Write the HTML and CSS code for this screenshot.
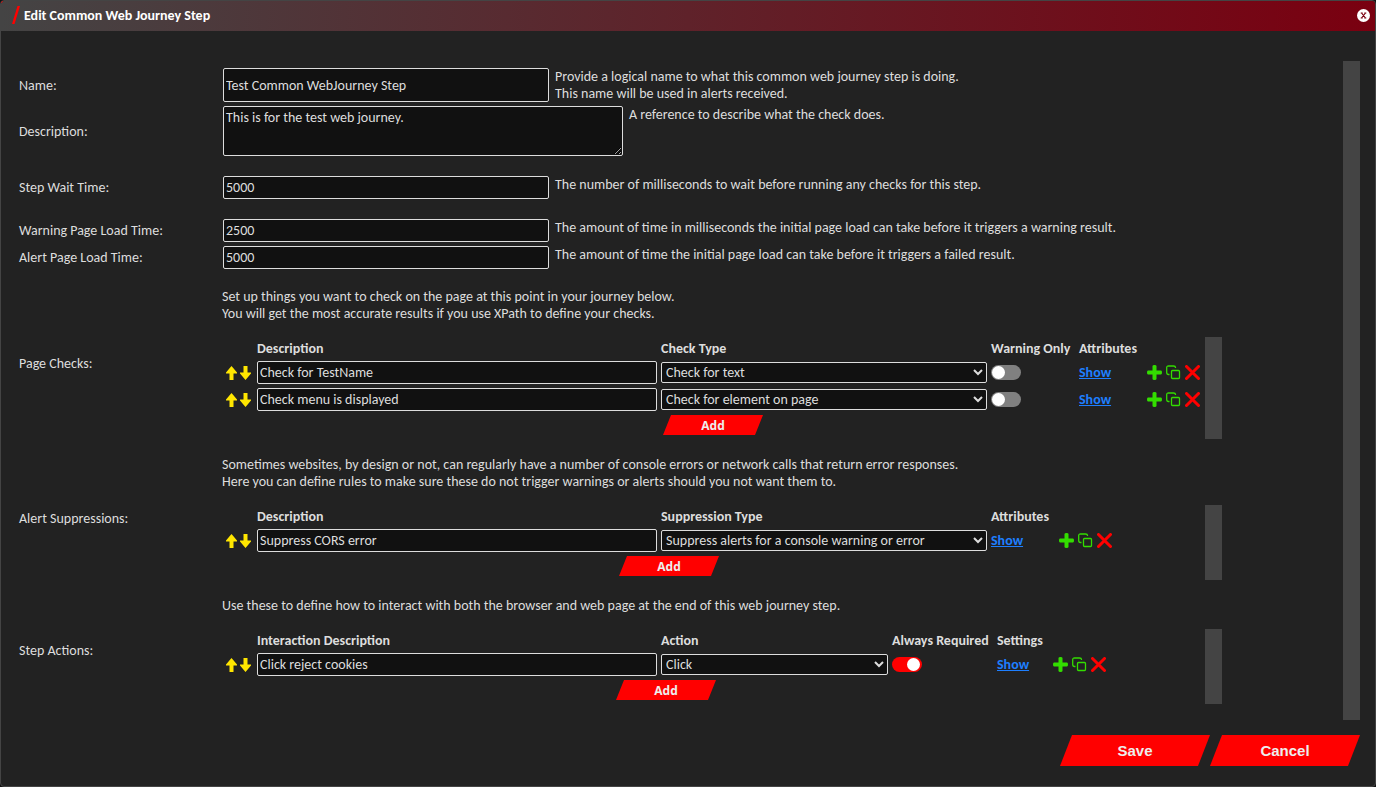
FILE: index.html
```
<!DOCTYPE html>
<html lang="en">
<head>
<meta charset="utf-8">
<title>Edit Common Web Journey Step</title>
<link rel="stylesheet" href="styles.css">
</head>
<body>
<svg class="symbols" aria-hidden="true">
  <symbol id="i-up" viewBox="0 0 11 14"><path d="M5.5 0L11 6.5V7.5H7.5V14H3.5V7.5H0V6.5Z" fill="#ffe600"/></symbol>
  <symbol id="i-down" viewBox="0 0 11 14"><path d="M5.5 14L11 7.5V6.5H7.5V0H3.5V6.5H0V7.5Z" fill="#ffe600"/></symbol>
  <symbol id="i-plus" viewBox="0 0 15 15"><path d="M5.5 1Q5.5 0 7.5 0T9.5 1V5.5H14Q15 5.5 15 7.5T14 9.5H9.5V14Q9.500 15 7.5 15T5.5 14V9.5H1Q0 9.5 0 7.5T1 5.5H5.5Z" fill="#33dd00"/></symbol>
  <symbol id="i-copy" viewBox="0 0 15 15"><g fill="none" stroke="#33dd00" stroke-width="1.3"><rect x="5.5" y="5.5" width="8" height="8" rx="1"/><path d="M3.5 9.500H2.500Q.7 9.500 .7 7.500V2.500Q.7 1 2.500 1H7.500Q9.500 1 9.500 2.500V3"/></g></symbol>
  <symbol id="i-delete" viewBox="0 0 15 15"><path d="M1.500 1.500L13.500 13.500M13.500 1.500L1.500 13.500" stroke="#f00" stroke-width="3" stroke-linecap="round"/></symbol>
</svg>
<form class="dialog">
  <div class="header">
    <svg class="slash" viewBox="0 0 8 18" aria-hidden="true"><path d="M5.500 0H8L2.500 18H0Z" fill="#f00"/></svg>
    <h1>Edit Common Web Journey Step</h1>
    <button type="button" class="close" aria-label="Close"><svg viewBox="0 0 13 13"><circle cx="6.5" cy="6.5" r="6.5" fill="#fff"/><path d="M4.5 4L8.5 9M8.5 4L4.500 9M3.700 4H5.700M7.300 4H9.300M3.700 9H5.700M7.300 9H9.300" stroke="#7a0010" stroke-width="1.2"/></svg></button>
  </div>

  <div class="body">
    <div class="fields">
      <div class="row">
        <label class="name" for="name">Name:</label>
        <input class="text tall" id="name" type="text" value="Test Common WebJourney Step">
        <p class="hint">Provide a logical name to what this common web journey step is doing.<br>This name will be used in alerts received.</p>
      </div>
      <div class="row spaced">
        <label class="name" for="description">Description:</label>
        <textarea class="text" id="description">This is for the test web journey.</textarea>
        <p class="hint">A reference to describe what the check does.</p>
      </div>
      <div class="row spaced">
        <label class="name" for="wait">Step Wait Time:</label>
        <input class="text" id="wait" type="text" value="5000">
        <p class="hint">The number of milliseconds to wait before running any checks for this step.</p>
      </div>
      <div class="row">
        <label class="name" for="warning">Warning Page Load Time:</label>
        <input class="text" id="warning" type="text" value="2500">
        <p class="hint">The amount of time in milliseconds the initial page load can take before it triggers a warning result.</p>
      </div>
      <div class="row spaced">
        <label class="name" for="alert">Alert Page Load Time:</label>
        <input class="text" id="alert" type="text" value="5000">
        <p class="hint">The amount of time the initial page load can take before it triggers a failed result.</p>
      </div>

      <div class="row section">
        <span class="name">Page Checks:</span>
        <div class="group">
          <p>Set up things you want to check on the page at this point in your journey below.<br>You will get the most accurate results if you use XPath to define your checks.</p>
          <div class="list">
            <table>
              <tr><th class="c-move"></th><th class="c-text">Description</th><th class="c-type">Check Type</th><th class="c-warning">Warning Only</th><th class="c-show">Attributes</th><th></th></tr>
              <tr>
                <td><div class="move"><button type="button" aria-label="Move up"><svg><use href="#i-up"/></svg></button><button type="button" aria-label="Move down"><svg><use href="#i-down"/></svg></button></div></td>
                <td><input class="text" type="text" aria-label="Description" value="Check for TestName"></td>
                <td><select aria-label="Check Type"><option>Check for text</option></select></td>
                <td><input class="toggle" type="checkbox" aria-label="Warning Only"></td>
                <td><a href="#">Show</a></td>
                <td><div class="tools"><button type="button" aria-label="Add"><svg><use href="#i-plus"/></svg></button><button type="button" aria-label="Copy"><svg><use href="#i-copy"/></svg></button><button type="button" aria-label="Delete"><svg><use href="#i-delete"/></svg></button></div></td>
              </tr>
              <tr>
                <td><div class="move"><button type="button" aria-label="Move up"><svg><use href="#i-up"/></svg></button><button type="button" aria-label="Move down"><svg><use href="#i-down"/></svg></button></div></td>
                <td><input class="text" type="text" aria-label="Description" value="Check menu is displayed"></td>
                <td><select aria-label="Check Type"><option>Check for element on page</option></select></td>
                <td><input class="toggle" type="checkbox" aria-label="Warning Only"></td>
                <td><a href="#">Show</a></td>
                <td><div class="tools"><button type="button" aria-label="Add"><svg><use href="#i-plus"/></svg></button><button type="button" aria-label="Copy"><svg><use href="#i-copy"/></svg></button><button type="button" aria-label="Delete"><svg><use href="#i-delete"/></svg></button></div></td>
              </tr>
              <tr><td colspan="6"><button type="button" class="btn add">Add</button></td></tr>
            </table>
            <div class="track"></div>
          </div>
        </div>
      </div>

      <div class="row section">
        <span class="name">Alert Suppressions:</span>
        <div class="group">
          <p>Sometimes websites, by design or not, can regularly have a number of console errors or network calls that return error responses.<br>Here you can define rules to make sure these do not trigger warnings or alerts should you not want them to.</p>
          <div class="list">
            <table>
              <tr><th class="c-move"></th><th class="c-text">Description</th><th class="c-type">Suppression Type</th><th class="c-show">Attributes</th><th></th></tr>
              <tr>
                <td><div class="move"><button type="button" aria-label="Move up"><svg><use href="#i-up"/></svg></button><button type="button" aria-label="Move down"><svg><use href="#i-down"/></svg></button></div></td>
                <td><input class="text" type="text" aria-label="Description" value="Suppress CORS error"></td>
                <td><select aria-label="Suppression Type"><option>Suppress alerts for a console warning or error</option></select></td>
                <td><a href="#">Show</a></td>
                <td><div class="tools"><button type="button" aria-label="Add"><svg><use href="#i-plus"/></svg></button><button type="button" aria-label="Copy"><svg><use href="#i-copy"/></svg></button><button type="button" aria-label="Delete"><svg><use href="#i-delete"/></svg></button></div></td>
              </tr>
              <tr><td colspan="5"><button type="button" class="btn add">Add</button></td></tr>
            </table>
            <div class="track"></div>
          </div>
        </div>
      </div>

      <div class="row section">
        <span class="name">Step Actions:</span>
        <div class="group">
          <p>Use these to define how to interact with both the browser and web page at the end of this web journey step.</p>
          <div class="list">
            <table>
              <tr><th class="c-move"></th><th class="c-text">Interaction Description</th><th class="c-action">Action</th><th class="c-required">Always Required</th><th class="c-settings">Settings</th><th></th></tr>
              <tr>
                <td><div class="move"><button type="button" aria-label="Move up"><svg><use href="#i-up"/></svg></button><button type="button" aria-label="Move down"><svg><use href="#i-down"/></svg></button></div></td>
                <td><input class="text" type="text" aria-label="Interaction Description" value="Click reject cookies"></td>
                <td><select aria-label="Action"><option>Click</option></select></td>
                <td><input class="toggle" type="checkbox" aria-label="Always Required" checked></td>
                <td><a href="#">Show</a></td>
                <td><div class="tools"><button type="button" aria-label="Add"><svg><use href="#i-plus"/></svg></button><button type="button" aria-label="Copy"><svg><use href="#i-copy"/></svg></button><button type="button" aria-label="Delete"><svg><use href="#i-delete"/></svg></button></div></td>
              </tr>
              <tr><td colspan="6"><button type="button" class="btn add">Add</button></td></tr>
            </table>
            <div class="track"></div>
          </div>
        </div>
      </div>
    </div>
    <div class="track"></div>
  </div>

  <div class="footer">
    <button type="submit" class="btn">Save</button>
    <button type="button" class="btn">Cancel</button>
  </div>
</form>
</body>
</html>
```

FILE: styles.css
```
* {
    box-sizing: border-box;
}

body {
    margin: 0;
    background: #111;
    color: #ddd;
    font: 14px/17px Carlito, Calibri, Lato, sans-serif;
}

.symbols {
    display: none;
}

p, h1 {
    margin: 0;
}

button {
    border: 0;
    padding: 0;
    background: none;
    cursor: pointer;
}

svg {
    display: block;
}

.dialog {
    display: flex;
    flex-direction: column;
    min-height: 100vh;
    border: 1px solid #444;
    border-radius: 4px;
    background: #222;
    overflow: hidden;
}

/* title bar */
.header {
    display: flex;
    align-items: center;
    height: 30px;
    padding: 0 5px 2px 11px;
    background: linear-gradient(135deg, #f00 2px, transparent 2px), linear-gradient(to right, #444, #7a0010);
}

.header h1 {
    flex: 1;
    margin-left: 4px;
    color: #fff;
    font-size: 14px;
    font-weight: bold;
}

.slash {
    width: 8px;
    height: 18px;
}

.close svg {
    width: 13px;
    height: 13px;
}

/* form */
.body {
    display: flex;
    flex: 1;
    margin: 30px 15px 15px 18px;
}

.fields {
    flex: 1;
    padding-top: 7px;
}

.track {
    width: 17px;
    background: #444;
}

.row {
    display: flex;
    align-items: center;
    margin-bottom: 4px;
}

.spaced {
    margin-bottom: 20px;
}

.section {
    margin-top: -1px;
    margin-bottom: 18px;
}

.section:last-child {
    margin-bottom: 0;
}

.name {
    width: 204px;
    flex: none;
}

.hint {
    align-self: flex-start;
    margin-left: 6px;
}

.text, select {
    height: 23px;
    border: 1px solid #ddd;
    border-radius: 2px;
    background: #111;
    color: #ddd;
    font: inherit;
}

.text {
    width: 326px;
    padding: 2px;
}

.tall {
    height: 34px;
}

textarea.text {
    width: 400px;
    height: 50px;
}

select {
    width: 100%;
    height: 21px;
    padding: 0;
    display: block;
}

.group p {
    margin-bottom: 15px;
}

.group {
    margin-left: -1px;
}

.list {
    display: flex;
    justify-content: space-between;
    width: 1000px;
}

table {
    border-spacing: 4px;
}

th, td {
    padding: 0;
    text-align: left;
}

th {
    line-height: 16px;
    white-space: nowrap;
}

td .text {
    display: block;
    width: 100%;
}

.c-move {
    width: 27px;
}

.c-text {
    width: 400px;
}

.c-type {
    width: 326px;
}

.c-action {
    width: 227px;
}

.c-warning {
    width: 84px;
}

.c-required {
    width: 101px;
}

.c-show {
    width: 64px;
}

.c-settings {
    width: 52px;
}

a {
    color: #1e7fff;
    font-weight: bold;
}

.move {
    display: flex;
    gap: 3px;
}

.move svg {
    width: 11px;
    height: 14px;
}

.tools {
    display: flex;
    gap: 4px;
}

.tools svg {
    width: 15px;
    height: 15px;
}

.toggle {
    appearance: none;
    display: block;
    width: 30px;
    height: 15px;
    margin: 0;
    padding: 1px;
    border-radius: 8px;
    background: #808080;
}

.toggle::before {
    content: "";
    display: block;
    width: 13px;
    height: 13px;
    border-radius: 50%;
    background: #fff;
}

.toggle:checked {
    background: #f00;
}

.toggle:checked::before {
    margin-left: 14px;
}

/* slanted buttons */
.btn {
    width: 150px;
    height: 31px;
    background: #f00;
    color: #eee;
    font: bold 15px "Liberation Sans", Arial, sans-serif;
    clip-path: polygon(12px 0, 100% 0, calc(100% - 12px) 100%, 0 100%);
}

.add {
    display: block;
    width: 100px;
    height: 20px;
    margin: 0 auto;
    font: bold 12px "Open Sans", sans-serif;
    clip-path: polygon(8px 0, 100% 0, calc(100% - 8px) 100%, 0 100%);
}

.footer {
    display: flex;
    justify-content: flex-end;
    padding: 0 15px 20px;
}
```
